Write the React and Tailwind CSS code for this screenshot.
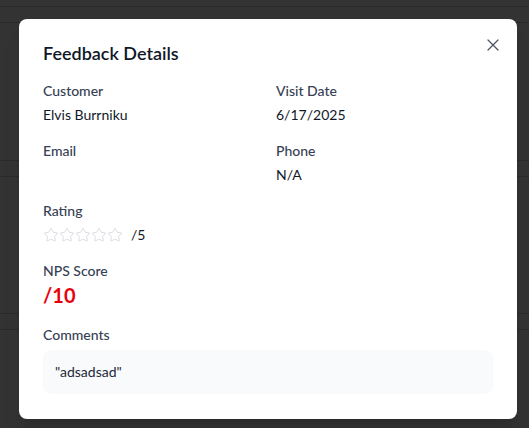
import React from "react";
import { X, Star } from "lucide-react";

export default function App() {
  const font = { fontFamily: 'Lato, "Noto Sans", sans-serif' };
  return (
    <div className="relative h-[428px] w-[529px] overflow-hidden bg-[#333333]" style={font}>
      <div className="flex flex-col">
        <div className="h-[7px] border-b border-[#2b2b2b]" />
        <div className="h-[16px] border-b border-[#2b2b2b]" />
        <div className="h-[138px] border-b border-[#2b2b2b]" />
        <div className="h-[16px] border-b border-[#2b2b2b]" />
        <div className="h-[137px] border-b border-[#2b2b2b]" />
        <div className="h-[16px] border-b border-[#2b2b2b]" />
      </div>

      <div className="absolute left-[19px] top-[19px] w-[498px] rounded-lg bg-white px-6 pt-5 pb-[25px] shadow-xl">
        <button className="absolute right-[12px] top-[14px] flex h-6 w-6 items-center justify-center text-gray-600">
          <X size={20} strokeWidth={1.5} />
        </button>
        <h2 className="text-lg font-semibold leading-7 text-gray-900">Feedback Details</h2>

        <div className="mt-[14px] flex flex-col gap-4">
          <div className="grid grid-cols-2 gap-4">
            <div>
              <p className="text-sm font-medium leading-5 text-gray-700">Customer</p>
              <p className="mt-1 text-sm leading-5 text-gray-900">Elvis Burrniku</p>
            </div>
            <div>
              <p className="text-sm font-medium leading-5 text-gray-700">Visit Date</p>
              <p className="mt-1 text-sm leading-5 text-gray-900">6/17/2025</p>
            </div>
            <div>
              <p className="text-sm font-medium leading-5 text-gray-700">Email</p>
              <p className="mt-1 text-sm leading-5 text-gray-900"></p>
            </div>
            <div>
              <p className="text-sm font-medium leading-5 text-gray-700">Phone</p>
              <p className="mt-1 text-sm leading-5 text-gray-900">N/A</p>
            </div>
          </div>

          <div>
            <p className="text-sm font-medium leading-5 text-gray-700">Rating</p>
            <div className="mt-1 flex items-center">
              <div className="flex">
                {[0, 1, 2, 3, 4].map((i) => (
                  <Star key={i} size={16} strokeWidth={1.25} className="text-gray-300" />
                ))}
              </div>
              <span className="ml-2 text-sm leading-5 text-gray-900">/5</span>
            </div>
          </div>

          <div>
            <p className="text-sm font-medium leading-5 text-gray-700">NPS Score</p>
            <p className="text-xl font-bold leading-7 text-red-600">/10</p>
          </div>

          <div>
            <p className="text-sm font-medium leading-5 text-gray-700">Comments</p>
            <div className="mt-[5px] rounded-lg bg-gray-50 p-3">
              <p className="text-sm leading-5 text-gray-800">"adsadsad"</p>
            </div>
          </div>
        </div>
      </div>
    </div>
  );
}
